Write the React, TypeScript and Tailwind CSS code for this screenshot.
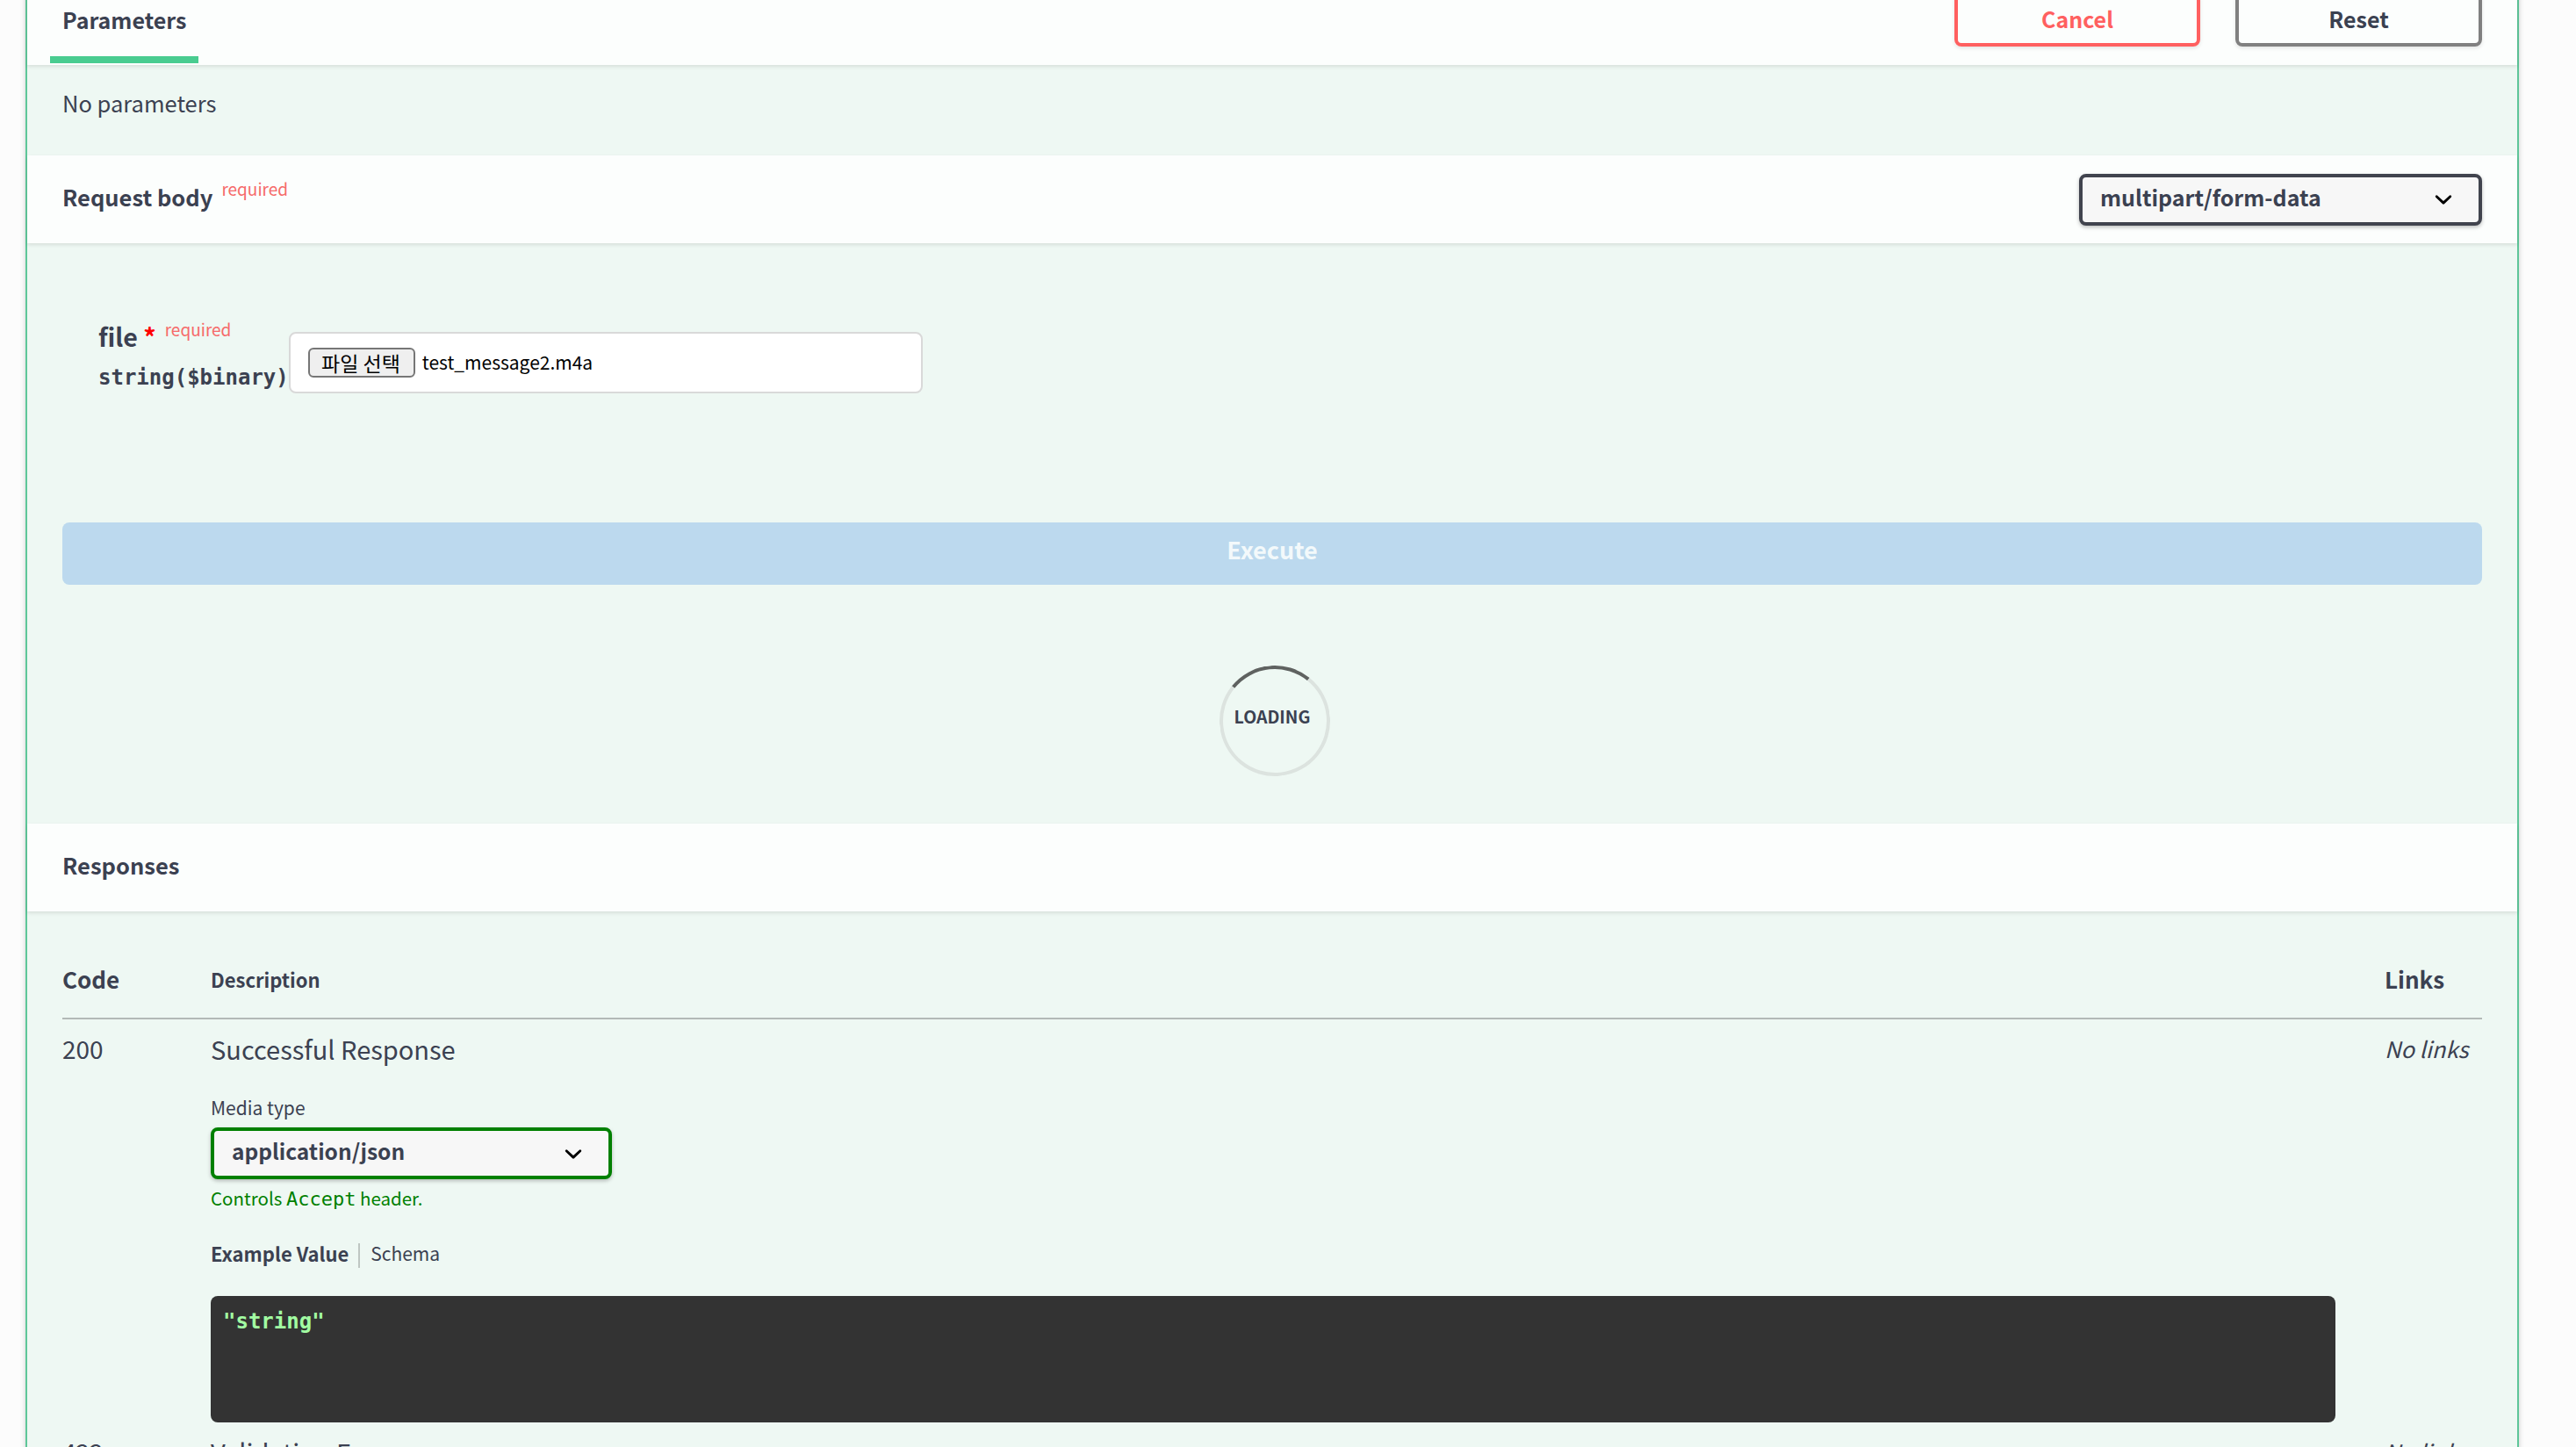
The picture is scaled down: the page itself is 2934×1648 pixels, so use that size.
import type { ReactNode } from "react";

function Chevron() {
  return (
    <svg viewBox="0 0 20 20" className="h-[40px] w-[40px] shrink-0 text-black" fill="currentColor">
      <path d="M13.418 7.859a.695.695 0 01.978 0 .68.68 0 010 .969l-3.908 3.83a.697.697 0 01-.979 0l-3.908-3.83a.68.68 0 010-.97.695.695 0 01.978 0L10 11l3.418-3.141z" />
    </svg>
  );
}

function Select({ value, className }: { value: string; className: string }) {
  return (
    <div
      className={`flex h-[59px] items-center justify-between rounded-[8px] border-4 bg-[#f7f7f7] pl-[20px] pr-[20px] font-bold shadow-[0_2px_4px_rgba(0,0,0,0.25)] ${className}`}
    >
      <span className="relative -top-[3px] leading-[34px]">{value}</span>
      <Chevron />
    </div>
  );
}

function SectionHeader({ children, right }: { children: ReactNode; right?: ReactNode }) {
  return (
    <div className="flex h-[100px] items-center justify-between bg-white/80 px-[40px] shadow-[0_2px_4px_rgba(0,0,0,0.1)]">
      <h4 className="mb-[7px] h-[34px] text-[25.5px] font-bold leading-[34px]">{children}</h4>
      {right}
    </div>
  );
}

function TryOutHeader() {
  return (
    <div className="flex h-[100px] items-center justify-between bg-white/80 px-[40px] pb-[5px] shadow-[0_2px_4px_rgba(0,0,0,0.1)]">
      <h4 className="relative text-[25px] font-bold leading-[34px]">
        Parameters
        <span className="absolute -left-[14px] -right-[14px] top-[59px] h-[8px] bg-[#49cc90]" />
      </h4>
      <div className="flex gap-[40px]">
        <button className="h-[62px] w-[280px] rounded-[8px] border-4 border-[#ff6060] text-[25px] font-bold text-[#ff6060] shadow-[0_2px_4px_rgba(0,0,0,0.1)]">
          Cancel
        </button>
        <button className="h-[62px] w-[281px] rounded-[8px] border-4 border-[#808080] text-[25px] font-bold text-[#3b4151] shadow-[0_2px_4px_rgba(0,0,0,0.1)]">
          Reset
        </button>
      </div>
    </div>
  );
}

function RequestBody() {
  return (
    <div className="px-[40px] pb-[54px] pt-[83px]">
      <div className="flex pl-[41px]">
        <div className="w-[217px] shrink-0">
          <div className="relative top-[3px] h-[40px] text-[28.5px] font-semibold leading-[40px]">
            file<span className="text-[#ff0000]"> *</span>
            <span className="relative -top-[12px] pl-[10px] text-[19px] font-normal leading-none text-[#f66a6a]">required</span>
          </div>
          <div className="mt-[15px] font-['DejaVu_Sans_Mono',monospace] text-[24px] font-bold leading-[30px]">
            string($binary)
          </div>
        </div>
        <div className="mt-[18px] flex h-[70px] w-[722px] items-center rounded-[8px] border-2 border-[#d9d9d9] bg-white pl-[20px]">
          <span className="flex h-[34px] items-center rounded-[6px] border-2 border-[#767676] bg-[#efefef] pl-[13px] pr-[15px] text-[23px] leading-none text-black">
            파일 선택
          </span>
          <span className="ml-[8px] text-[21px] text-black">test_message2.m4a</span>
        </div>
      </div>

      <button className="mt-[147px] flex h-[71px] w-full items-center justify-center rounded-[8px] bg-[#bcd9ee] text-[27px] font-bold text-[#f3f9fb]">
        <span className="relative -top-[4px]">Execute</span>
      </button>

      <div className="mt-[92px] flex justify-center">
        <div className="relative ml-[6px] flex h-[126px] w-[126px] items-center justify-center">
          <span className="absolute inset-0 -rotate-6 rounded-full border-4 border-[#dce3df] border-t-[#5f6260]" />
          <span className="relative -translate-x-[3px] -translate-y-[5px] text-[19.5px] font-bold leading-[24px]">LOADING</span>
        </div>
      </div>
    </div>
  );
}

function Responses() {
  return (
    <div className="px-[40px]">
      <div className="grid grid-cols-[169px_1fr_167px] items-center border-b-2 border-[#b3b9b7] pb-[27px] pt-[60px]">
        <div className="text-[26px] font-bold leading-[34px]">Code</div>
        <div className="text-[22px] font-bold leading-[34px]">Description</div>
        <div className="pl-[56px] text-[26px] font-bold leading-[34px]">Links</div>
      </div>

      <div className="grid grid-cols-[169px_1fr_167px] items-start pt-[13px]">
        <div className="text-[28px] leading-[40px]">200</div>
        <div>
          <div className="text-[29px] leading-[40px]">Successful Response</div>
          <div className="mt-[32px] text-[21px] leading-[30px]">Media type</div>
          <Select value="application/json" className="mt-[8px] w-[457px] border-[#008000] text-[24.5px]" />
          <div className="mt-[6px] h-[30px] text-[20.5px] leading-[30px] text-[#008000]">
            Controls <code className="font-['DejaVu_Sans_Mono',monospace] text-[22px] leading-none">Accept</code> header.
          </div>
          <div className="mt-[33px] flex h-[30px] items-center leading-[30px]">
            <span className="text-[22px] font-bold">Example Value</span>
            <span className="ml-[11px] h-[28px] w-[2px] translate-y-[3px] bg-black/20" />
            <span className="ml-[12px] text-[21px]">Schema</span>
          </div>
          <div className="mt-[34px] h-[144px] rounded-[8px] bg-[#333333] px-[14px] pt-[14px]">
            <pre className="font-['DejaVu_Sans_Mono',monospace] text-[24px] font-bold leading-[30px] text-[#a2fca2]">"string"</pre>
          </div>
        </div>
        <div className="pl-[56px] text-[25.5px] italic leading-[40px]">No links</div>
      </div>

      <div className="grid grid-cols-[169px_1fr_167px] items-start pt-[13px]">
        <div className="text-[28px] leading-[40px]">422</div>
        <div className="text-[29px] leading-[40px]">Validation Error</div>
        <div className="pl-[56px] text-[25.5px] italic leading-[40px]">No links</div>
      </div>
    </div>
  );
}

export default function App() {
  return (
    <div className="h-[1648px] overflow-hidden bg-[#fcfcfc] font-['Noto_Sans_CJK_KR',sans-serif] text-[#3b4151]">
      <div className="-mt-[28px] ml-[29px] w-[2840px] rounded-[8px] border-2 border-[#5ec699] bg-[#eef8f3] pb-[200px] shadow-[0_0_6px_rgba(0,0,0,0.19)]">
        <TryOutHeader />
        <div className="h-[103px] px-[40px] pt-[26px] text-[25.5px] leading-[34px]">No parameters</div>
        <SectionHeader right={<Select value="multipart/form-data" className="w-[459px] border-[#41444e] text-[25px]" />}>
          Request body
          <span className="relative -top-[12px] pl-[10px] text-[19px] font-normal leading-none text-[#f66a6a]">required</span>
        </SectionHeader>
        <RequestBody />
        <SectionHeader>Responses</SectionHeader>
        <Responses />
      </div>
    </div>
  );
}
